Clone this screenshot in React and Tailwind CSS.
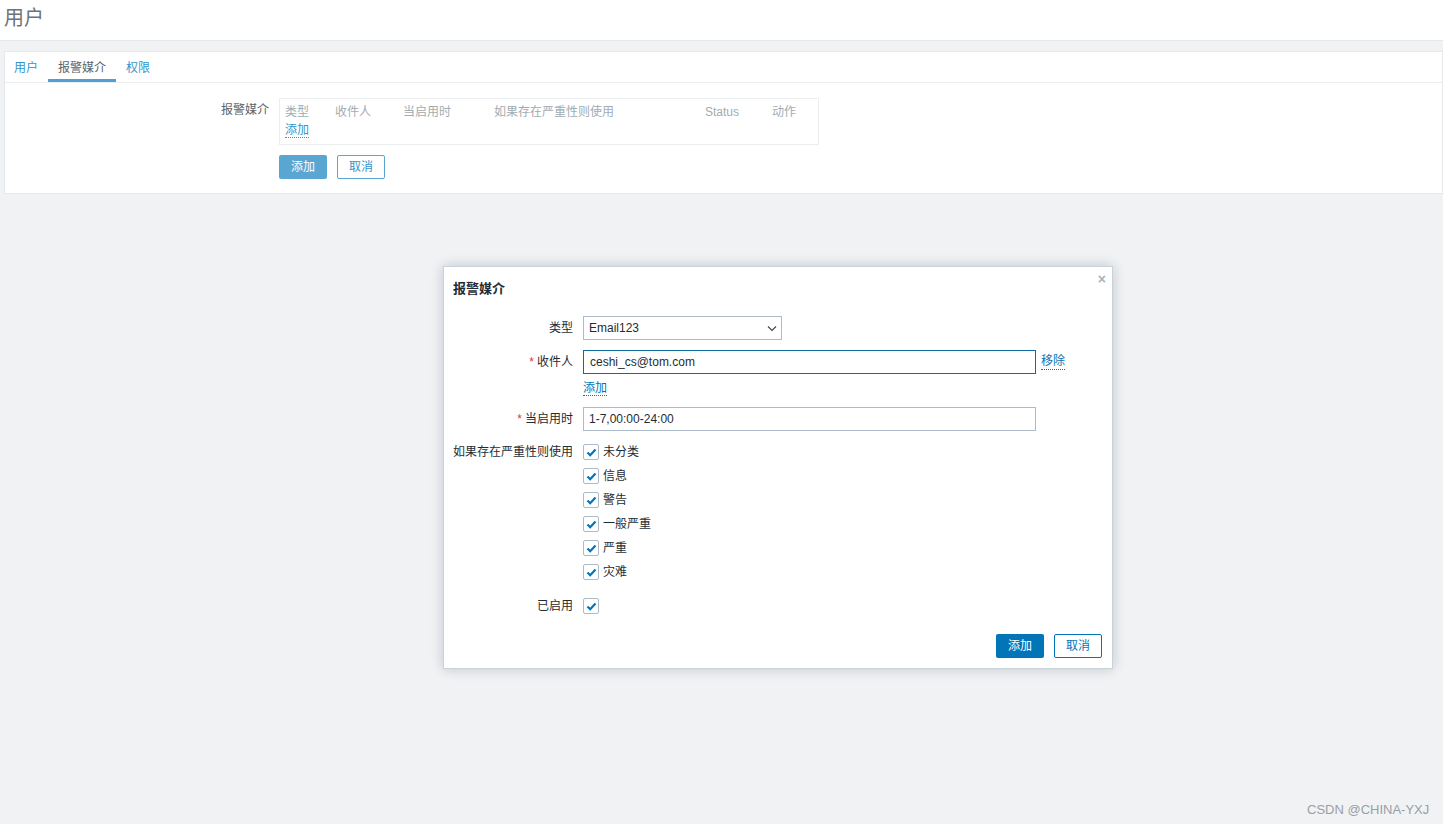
import React from "react";

const font = { fontFamily: '"Liberation Sans", Arial, "Noto Sans CJK SC", sans-serif' };

function Check() {
  return (
    <span className="inline-flex h-[16px] w-[16px] items-center justify-center rounded-[2px] border border-[#acbbc7] bg-white">
      <svg width="11" height="9" viewBox="0 0 11 9">
        <path d="M1.5 4.5 L4.2 7.2 L9.5 1.5" fill="none" stroke="#0275b8" strokeWidth="2.2" />
      </svg>
    </span>
  );
}

function Row({ label, req, children, className = "" }) {
  return (
    <div className={"flex " + className}>
      <div className="w-[139px] shrink-0 whitespace-nowrap pr-[10px] text-right text-[12px] leading-[24px] text-[#1f2c33]">
        {req && <span className="mr-[3px] text-[#e33734]">*</span>}
        {label}
      </div>
      <div className="flex-1">{children}</div>
    </div>
  );
}

export default function App() {
  const sev = ["未分类", "信息", "警告", "一般严重", "严重", "灾难"];
  return (
    <div className="relative min-h-[824px] w-[1443px] bg-[#f0f2f4]" style={font}>
      <div className="h-[41px] border-b border-[#e5e8eb] bg-white pl-[4px] pt-[4px]">
        <div className="text-[20px] leading-[28px] text-[#6b7478]">用户</div>
      </div>
      <div className="ml-[4px] mt-[10px] border border-[#e6e9ec] bg-white">
        <div className="flex h-[31px] border-b border-[#ebeef0] pl-[4px] text-[12px]">
          <div className="px-[5px] pt-[7px] text-[#3195cd]">用户</div>
          <div className="ml-[5px] flex w-[68px] justify-center border-b-[3px] border-[#4f9fd4] pt-[7px] text-[#5a6469]">报警媒介</div>
          <div className="ml-[10px] pt-[7px] text-[#3195cd]">权限</div>
        </div>
        <div className="flex pb-[14px] pt-[15px]">
          <div className="w-[264px] pr-[0px] text-right text-[12px] leading-[24px] text-[#5a6469]">报警媒介</div>
          <div className="ml-[10px]">
            <div className="h-[47px] w-[540px] border border-[#ebeef0] px-[5px] pt-[4px] text-[12px]">
              <div className="flex leading-[18px] text-[#a1acb2]">
                <span className="w-[50px]">类型</span>
                <span className="w-[68px]">收件人</span>
                <span className="w-[91px]">当启用时</span>
                <span className="w-[211px]">如果存在严重性则使用</span>
                <span className="w-[67px]">Status</span>
                <span>动作</span>
              </div>
              <span className="border-b border-dotted border-[#3195cd] leading-[16px] text-[#3195cd]">添加</span>
            </div>
            <div className="mt-[10px] flex gap-[10px] text-[12px]">
              <div className="flex h-[24px] w-[48px] items-center justify-center rounded-[2px] bg-[#5aa6d3] text-white">添加</div>
              <div className="flex h-[24px] w-[48px] items-center justify-center rounded-[2px] border border-[#5aa6d3] text-[#3195cd]">取消</div>
            </div>
          </div>
        </div>
      </div>

      <div className="absolute left-[443px] top-[266px] w-[670px] border border-[#c9d2d8] bg-white shadow-[0_0_12px_rgba(0,30,50,0.2)]">
        <div className="relative px-[9px] pt-[12px] text-[13px] font-bold leading-[20px] text-[#1f2c33]">
          报警媒介
          <span className="absolute right-[6px] top-[2px] text-[14px] font-bold text-[#a9b3b9]">×</span>
        </div>
        <div className="mt-[17px] pr-[10px] text-[12px] text-[#1f2c33]">
          <Row label="类型">
            <div className="flex h-[24px] w-[199px] items-center justify-between border border-[#acbbc7] pl-[5px] pr-[4px]">
              <span>Email123</span>
              <svg width="10" height="7" viewBox="0 0 10 7"><path d="M1 1.5 L5 5.5 L9 1.5" fill="none" stroke="#3d4a52" strokeWidth="1.2" /></svg>
            </div>
          </Row>
          <Row label="收件人" req className="mt-[10px]">
            <div className="flex items-center">
              <div className="flex h-[24px] w-[453px] items-center border border-[#0f6aa2] pl-[6px]">ceshi_cs@tom.com</div>
              <span className="ml-[5px] border-b border-dotted border-[#0275b8] leading-[15px] text-[#0275b8]">移除</span>
            </div>
            <div className="mt-[4px] leading-[20px]">
              <span className="border-b border-dotted border-[#0275b8] leading-[15px] text-[#0275b8]">添加</span>
            </div>
          </Row>
          <Row label="当启用时" req className="mt-[9px]">
            <div className="flex h-[24px] w-[453px] items-center border border-[#acbbc7] pl-[5px]">1-7,00:00-24:00</div>
          </Row>
          <Row label="如果存在严重性则使用" className="mt-[9px]">
            <div className="flex flex-col">
              {sev.map((s) => (
                <div key={s} className="flex h-[24px] items-center gap-[4px]">
                  <Check />
                  <span>{s}</span>
                </div>
              ))}
            </div>
          </Row>
          <Row label="已启用" className="mt-[10px]">
            <div className="flex h-[24px] items-center"><Check /></div>
          </Row>
        </div>
        <div className="mt-[16px] flex justify-end gap-[10px] pb-[10px] pr-[10px] text-[12px]">
          <div className="flex h-[24px] w-[48px] items-center justify-center rounded-[2px] bg-[#0275b8] text-white">添加</div>
          <div className="flex h-[24px] w-[48px] items-center justify-center rounded-[2px] border border-[#0275b8] text-[#0275b8]">取消</div>
        </div>
      </div>

      <div className="absolute left-[1307px] top-[800px] text-[13px] text-[#9a9fa4]">CSDN @CHINA-YXJ</div>
    </div>
  );
}
